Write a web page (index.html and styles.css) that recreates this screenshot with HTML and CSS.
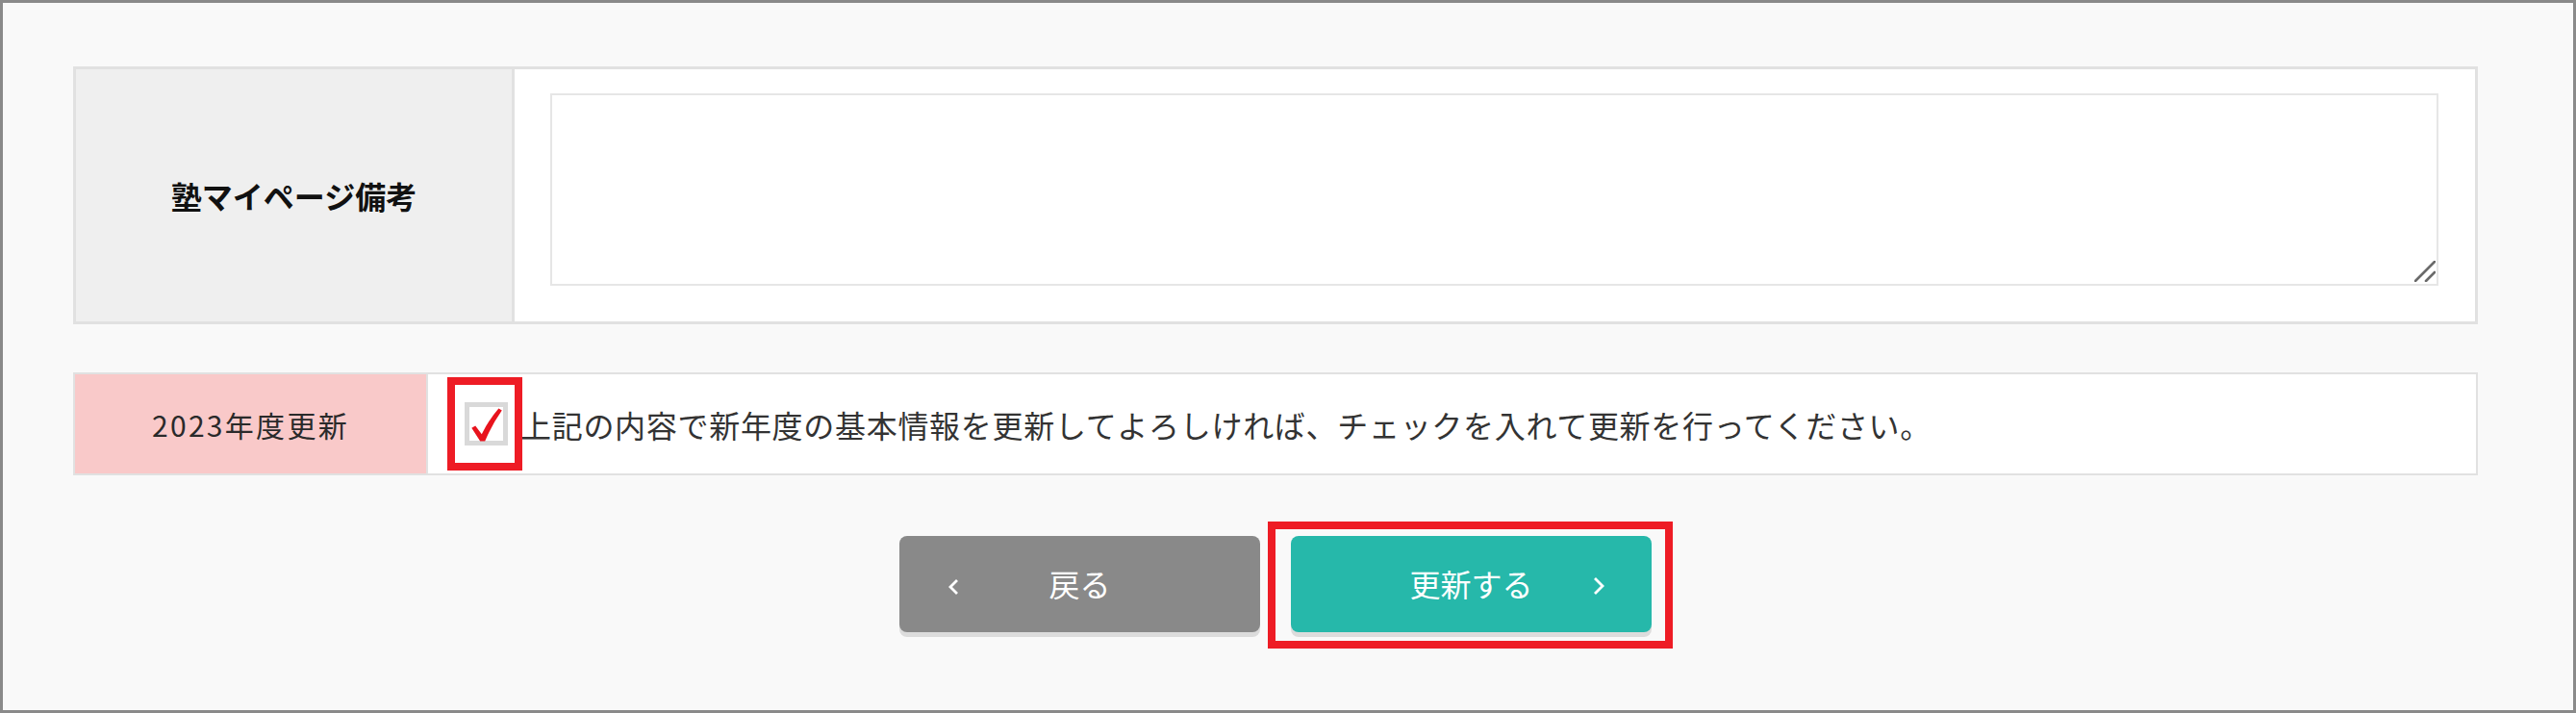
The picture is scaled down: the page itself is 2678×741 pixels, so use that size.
FILE: index.html
```html
<!DOCTYPE html>
<html lang="ja">
<head>
<meta charset="utf-8">
<title>更新</title>
<link rel="stylesheet" href="styles.css">
</head>
<body>
<div class="frame">
  <div class="content">
    <div class="table memo">
      <div class="th">塾マイページ備考</div>
      <div class="td memo-cell">
        <div class="ta-wrap">
          <textarea class="ta"></textarea>
          <svg class="grip" width="22" height="22" viewBox="0 0 22 22"><path d="M1 21 L21 1 M12 21 L21 12" stroke="#6a6a6a" stroke-width="2.6" stroke-linecap="round" fill="none"/></svg>
        </div>
      </div>
    </div>

    <div class="table renew">
      <div class="th pink">2023年度更新</div>
      <div class="td check-row">
        <span class="cb-wrap">
          <span class="cb">
            <svg width="32" height="35" viewBox="0 0 32 35"><path d="M0.3 20.8 L4.2 18.4 L10.8 27.2 Q18.6 11.6 28.4 0.4 L31.8 2.4 Q22.2 15.8 14.2 34.4 L9.2 34.4 Z" fill="#e8131d"/></svg>
          </span>
          <span class="annot annot-cb"></span>
        </span>
        <span class="msg">上記の内容で新年度の基本情報を更新してよろしければ、チェックを入れて更新を行ってください。</span>
      </div>
    </div>

    <div class="buttons">
      <a class="btn back">
        <svg class="chev chev-left" width="14" height="18" viewBox="0 0 14 18"><polyline points="11,2 4,9 11,16" fill="none" stroke="#fff" stroke-width="2.8"/></svg>
        <span>戻る</span>
      </a>
      <span class="btn-wrap">
        <a class="btn submit">
          <span>更新する</span>
          <svg class="chev chev-right" width="14" height="20" viewBox="0 0 14 20"><polyline points="3,2 11,10 3,18" fill="none" stroke="#fff" stroke-width="2.8"/></svg>
        </a>
        <span class="annot annot-btn"></span>
      </span>
    </div>
  </div>
</div>
</body>
</html>
```

FILE: styles.css
```css
* { box-sizing: border-box; }
html, body { margin: 0; padding: 0; }
body {
  font-family: "Noto Sans CJK JP", "Noto Sans", sans-serif;
  background: #f9f9f9;
}
.frame {
  width: 2678px;
  height: 741px;
  border: 3px solid #8a8a8a;
  background: #f9f9f9;
  overflow: hidden;
  padding: 66px 99px 0 73px;
}
.content { width: 2500px; }

.table {
  display: grid;
  background: #fff;
}
.memo {
  grid-template-columns: 456px 1fr;
  border: 3px solid #e1e1e1;
}
.memo .th {
  background: #efefef;
  border-right: 3px solid #e1e1e1;
  display: flex;
  align-items: center;
  justify-content: center;
  font-size: 32px;
  font-weight: 700;
  color: #111;
}
.memo-cell {
  padding: 25px 38px 37px 37px;
}
.ta-wrap { position: relative; }
.ta {
  display: block;
  width: 100%;
  height: 200px;
  border: 2px solid #e6e6e6;
  background: #fff;
  resize: none;
  outline: none;
  margin: 0;
}
.grip {
  position: absolute;
  right: 3px;
  bottom: 4px;
}

.renew {
  margin-top: 50px;
  grid-template-columns: 367px 1fr;
  border: 2px solid #e1e1e1;
  height: 107px;
}
.renew .th {
  background: #f9c9c9;
  border-right: 2px solid #e1e1e1;
  display: flex;
  align-items: center;
  justify-content: center;
  font-size: 30px;
  letter-spacing: 2.3px;
  color: #2a2a2a;
}
.check-row {
  display: flex;
  align-items: center;
  padding-left: 38px;
}
.cb-wrap { position: relative; display: flex; }
.cb {
  width: 45px;
  height: 45px;
  border: 5px solid #d9d9d9;
  background: #fff;
  display: flex;
  align-items: center;
  justify-content: center;
}
.cb svg { margin-top: 1px; margin-left: 1px; flex: none; }
.msg {
  margin-left: 13px;
  font-size: 32px;
  letter-spacing: 0.7px;
  color: #333;
  white-space: nowrap;
}
.annot {
  position: absolute;
  border: 8px solid #ee1c25;
  pointer-events: none;
}
.annot-cb {
  left: -18px;
  top: -26px;
  width: 78px;
  height: 97px;
}

.buttons {
  margin-top: 63px;
  display: flex;
  justify-content: center;
  gap: 32px;
}
.btn {
  position: relative;
  width: 375px;
  height: 100px;
  border-radius: 8px;
  display: flex;
  align-items: center;
  justify-content: center;
  color: #fff;
  font-size: 32px;
  box-shadow: 0 5px 0 #dcdcdc;
  text-decoration: none;
}
.back { background: #898989; }
.submit { background: #26b8aa; }
.btn span { margin-top: -2px; }
.chev { position: absolute; top: 50%; }
.chev-left { left: 49px; margin-top: -6px; }
.chev-right { right: 48px; margin-top: -8px; }
.btn-wrap { position: relative; display: flex; }
.annot-btn {
  left: -24px;
  top: -15px;
  width: 421px;
  height: 132px;
}
```
